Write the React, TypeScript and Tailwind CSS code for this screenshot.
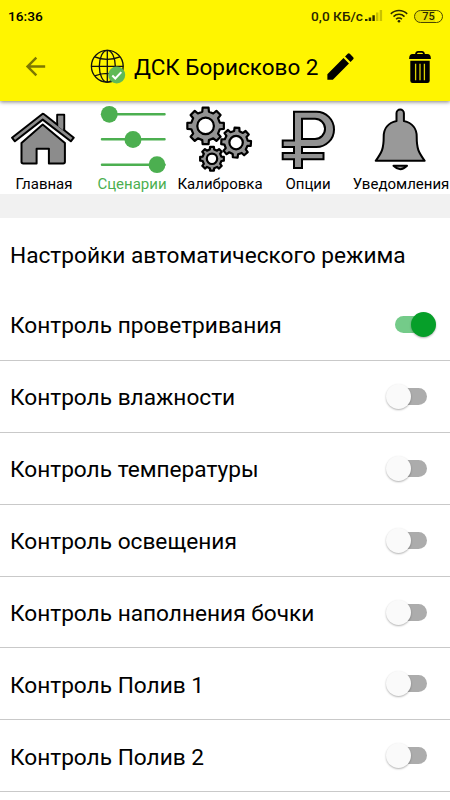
import { useState } from "react";

const ROBOTO = "font-['Roboto','Noto_Sans',sans-serif]";

const INITIAL = [
  { id: "air", label: "Контроль проветривания", on: true },
  { id: "humidity", label: "Контроль влажности", on: false },
  { id: "temp", label: "Контроль температуры", on: false },
  { id: "light", label: "Контроль освещения", on: false },
  { id: "barrel", label: "Контроль наполнения бочки", on: false },
  { id: "water1", label: "Контроль Полив 1", on: false },
  { id: "water2", label: "Контроль Полив 2", on: false },
];

// outline of a gear with 8 teeth and a round hole
function gearPath(cx: number, cy: number, outer: number, inner: number, hole: number, turn = 0) {
  const pt = (r: number, a: number) => `${(cx + r * Math.cos(a)).toFixed(2)} ${(cy + r * Math.sin(a)).toFixed(2)}`;
  const pts: string[] = [];
  for (let i = 0; i < 8; i++) {
    const a = (i * Math.PI) / 4 + turn;
    pts.push(pt(inner, a - 0.23), pt(outer, a - 0.16), pt(outer, a + 0.16), pt(inner, a + 0.23));
  }
  return `M${pts.join("L")}ZM${cx - hole} ${cy}a${hole} ${hole} 0 1 0 ${hole * 2} 0a${hole} ${hole} 0 1 0 ${-hole * 2} 0Z`;
}

function HomeIcon() {
  return (
    <svg width="88" height="73" viewBox="0 0 88 73" fill="#8c8c8c" stroke="#000" strokeWidth="2" strokeLinejoin="round">
      <path d="M57.2 22V13.8h7v16z" />
      <path d="M42.700 23.500 21.500 42v18.700q0 1.700 1.700 1.700H36.600V47.700h12.300v14.700H63.200q1.700 0 1.700-1.700V42z" />
      <path d="M42.700 12.800 12 36.700l2.900 3.600L42.700 18.600 70.800 40.300l3-3.600L45 14q-1.200-1-2.300-1.200z" />
      <path d="M58.200 14.800h5v14.500l-5-3.800z" stroke="none" />
    </svg>
  );
}

function SlidersIcon() {
  return (
    <svg width="88" height="73" viewBox="0 0 88 73" fill="#4caf50">
      <path d="M14 13.300H76.500M14 38.300H76.500M14 63.700H76.500" stroke="#4caf50" strokeWidth="2.500" strokeLinecap="round" />
      <circle cx="21.300" cy="13.300" r="8.400" />
      <circle cx="45" cy="38.400" r="8.500" />
      <circle cx="69" cy="63.700" r="8.400" />
    </svg>
  );
}

function GearsIcon() {
  return (
    <svg width="88" height="73" viewBox="0 0 88 73" fill="#929292" stroke="#000" strokeWidth="2.200" strokeLinejoin="round" fillRule="evenodd">
      <path d={gearPath(29.6, 24.9, 18.5, 14.6, 8.3)} />
      <path d={gearPath(60.1, 41.6, 15, 11.8, 6.7, 0.06)} />
      <path d={gearPath(36, 57.8, 12, 9.6, 5.2)} />
    </svg>
  );
}

function RubleIcon() {
  return (
    <svg width="88" height="73" viewBox="0 0 88 73" fill="#929292" stroke="#000" strokeWidth="2" fillRule="evenodd">
      <path d="M30 10.700H52.300a17.700 17.700 0 0 1 0 35.400H38v5.800H59.500v6.300H38v8.800H30v-8.800H18.700v-6.300H30v-5.800H18.700v-6.500H30zM38 17.800V37.900H51a10.050 10.050 0 0 0 0-20.100z" />
    </svg>
  );
}

function BellIcon() {
  return (
    <svg width="98" height="73" viewBox="0 0 98 73" fill="#999" stroke="#000" strokeWidth="2" strokeLinejoin="round">
      <path d="M44.500 20V12.300a3.700 3.700 0 0 1 7.400 0V20C60.500 21.800 64.700 28 64.700 35.500C64.700 48 66.500 51 72.700 59.800H23.700C29.900 51 31.700 48 31.700 35.500C31.700 28 35.900 21.800 44.500 20z" />
      <path d="M41.500 64.800h13.500q-6.700 6.800-13.500 0z" />
    </svg>
  );
}

const TABS = [
  { id: "home", label: "Главная", icon: HomeIcon },
  { id: "scenarios", label: "Сценарии", icon: SlidersIcon },
  { id: "calibration", label: "Калибровка", icon: GearsIcon },
  { id: "options", label: "Опции", icon: RubleIcon },
  { id: "alerts", label: "Уведомления", icon: BellIcon },
];

function StatusBar() {
  return (
    <div className="flex h-8 items-center pl-2 pr-[7px] text-[13.700px] font-medium text-[#292700]">
      <span className="text-black">16:36</span>
      <span className="ml-auto">0,0 КБ/с</span>
      <svg className="ml-[2px]" width="18" height="14" viewBox="0 0 18 14" fill="currentColor">
        <path d="M0 10h2.500v2H0zM3.700 8.500h2.500V12H3.700zM7.400 6.200h2.400V12H7.400z" />
        <path d="M11 3.500h2.400V12H11zM14.700 1h2.400v11h-2.400z" opacity=".25" />
      </svg>
      <svg className="ml-[7px]" width="18" height="14" viewBox="0 0 18 14" fill="none" stroke="currentColor" strokeWidth="1.500">
        <path d="M.8 4.900a11.600 11.600 0 0 1 16.400 0M3.500 7.600a7.800 7.800 0 0 1 11 0M6.100 10.200a4.100 4.100 0 0 1 5.800 0" />
        <circle cx="9" cy="12.300" r="1.300" fill="currentColor" stroke="none" />
      </svg>
      <span className="ml-[6px] flex h-[13px] w-[29px] items-center justify-center rounded-full border border-[#4a4700] bg-[linear-gradient(to_right,#e9e000_75%,#fff500_75%)] text-[11px] leading-none">75</span>
    </div>
  );
}

function AppBar() {
  return (
    <div className="flex h-[69px] items-center pl-[21px] pr-[15px]">
      <button className="text-[#7d7700]">
        <svg width="29" height="29" viewBox="0 0 24 24" fill="currentColor">
          <path d="M20 11H7.830l5.590-5.590L12 4l-8 8 8 8 1.410-1.410L7.830 13H20v-2z" />
        </svg>
      </button>
      <svg className="ml-[40px] shrink-0" width="36" height="36" viewBox="0 0 36 36" fill="none" stroke="#111" strokeWidth="1.300">
        <circle cx="17.300" cy="17.300" r="15.900" />
        <ellipse cx="17.300" cy="17.300" rx="8" ry="15.900" />
        <path d="M17.300 1.400v31.800M1.400 17.300h31.800M4.700 7.800q12.600 5 25.200 0M4.700 26.800q12.600-5 25.200 0" />
        <circle cx="26.700" cy="26" r="8.500" fill="#60b957" stroke="none" />
        <path d="M22.300 26.500l3 3 6-6.400" stroke="#fff" strokeWidth="2" />
      </svg>
      <h1 className="ml-[8px] whitespace-nowrap pt-[2px] text-[22.500px] leading-none text-black">ДСК Борисково 2</h1>
      <button className="ml-[5px] shrink-0">
        <svg width="35" height="35" viewBox="0 0 24 24">
          <path d="M3 17.250V21h3.750L17.810 9.940l-3.750-3.750L3 17.250zM20.710 7.040a.996.996 0 0 0 0-1.410l-2.340-2.340a.996.996 0 0 0-1.410 0l-1.830 1.830 3.750 3.750 1.830-1.830z" />
        </svg>
      </button>
      <button className="ml-auto shrink-0">
        <svg width="30" height="34" viewBox="0 0 30 34">
          <path d="M11 4.500q0-2.700 2.200-2.700h3.600q2.200 0 2.200 2.700" fill="none" stroke="#000" strokeWidth="1.800" />
          <path d="M7.500 3.900h15q3.400 0 3.400 5.100H4.100q0-5.100 3.400-5.100z" />
          <path d="M5.300 10.700h19.400v20q0 2.300-2.300 2.300H7.600q-2.300 0-2.300-2.300z" />
          <path d="M10.600 13.700v16.500M15 13.700v16.500M19.400 13.700v16.500" stroke="#d9d000" strokeWidth="1.300" />
        </svg>
      </button>
    </div>
  );
}

function Toggle({ on, onChange }: { on: boolean; onChange: () => void }) {
  return (
    <button
      role="switch"
      aria-checked={on}
      onClick={onChange}
      className={`flex h-[25px] w-[50px] items-center ${on ? "justify-end" : "justify-start"}`}
    >
      {on && <span className="-mr-4 h-[17px] w-8 rounded-full bg-[#74cb89]" />}
      <span className={`z-10 size-[25px] shrink-0 rounded-full shadow-[0_1px_2px_rgba(0,0,0,0.3)] ${on ? "bg-[#069f29]" : "bg-[#fafafa]"}`} />
      {!on && <span className="-ml-4 h-[17px] w-8 rounded-full bg-[#acacac]" />}
    </button>
  );
}

export default function App() {
  const [tab, setTab] = useState("scenarios");
  const [items, setItems] = useState(INITIAL);

  const toggle = (id: string) =>
    setItems((prev) => prev.map((it) => (it.id === id ? { ...it, on: !it.on } : it)));

  return (
    <div className={`h-[800px] w-[450px] overflow-hidden bg-white text-black ${ROBOTO}`}>
      <header className="relative z-10 h-[101px] bg-[#fff500] shadow-[0_1px_4px_rgba(0,0,0,0.5)]">
        <StatusBar />
        <AppBar />
      </header>

      <nav className="flex h-[93px]">
        {TABS.map((t) => {
          const Icon = t.icon;
          return (
            <button
              key={t.id}
              onClick={() => setTab(t.id)}
              className={`flex min-w-[88px] shrink-0 flex-col items-center text-[15px] leading-5 last:w-[98px] ${tab === t.id ? "text-[#4caf50]" : "text-black"}`}
            >
              <Icon />
              <span className="whitespace-nowrap">{t.label}</span>
            </button>
          );
        })}
      </nav>

      <div className="h-6 bg-[#f1f1f1]" />

      <main>
        <h2 className="flex h-[71px] items-center pl-[10px] pt-[5px] text-[22.660px]">Настройки автоматического режима</h2>
        {items.map((it) => (
          <div key={it.id} className="flex h-[71.900px] items-center justify-between border-b border-[#c9c9c9] pl-[10px] pr-[14px]">
            <span className="pt-[4px] text-[22.660px]">{it.label}</span>
            <Toggle on={it.on} onChange={() => toggle(it.id)} />
          </div>
        ))}
      </main>
    </div>
  );
}
